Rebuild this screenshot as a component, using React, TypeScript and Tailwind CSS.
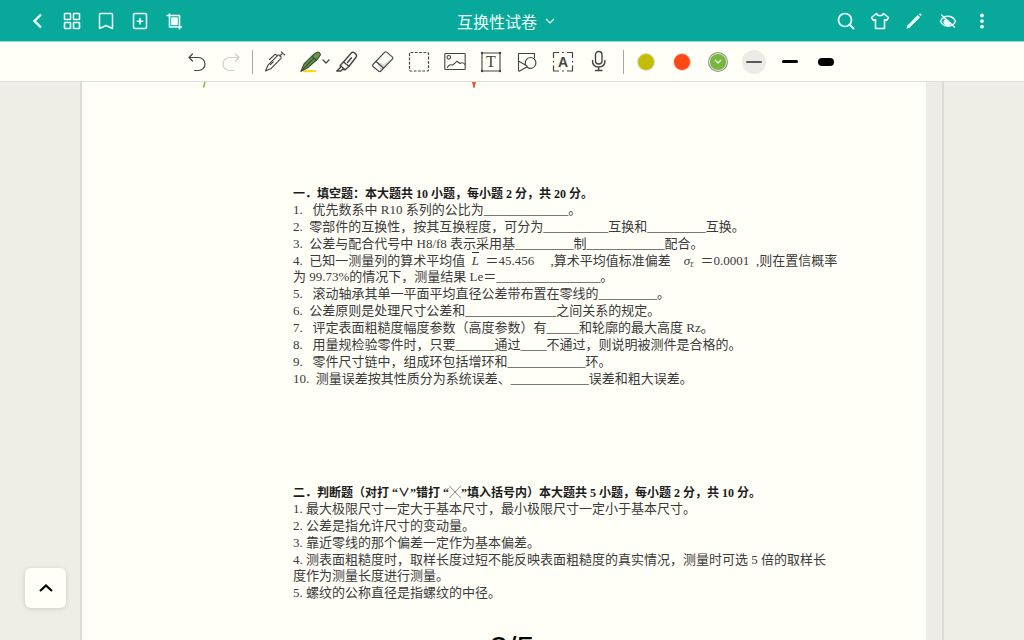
import React, { useState } from 'react';

interface IconProps {
  children: React.ReactNode;
  className?: string;
}

// All toolbar glyphs are drawn on the same 24px grid
function Icon({ children, className = '' }: IconProps) {
  return (
    <svg
      viewBox="0 0 24 24"
      className={`size-6 shrink-0 overflow-visible ${className}`}
      fill="none"
      stroke="currentColor"
      strokeWidth="1.1"
      strokeLinecap="round"
      strokeLinejoin="round"
      aria-hidden="true"
    >
      {children}
    </svg>
  );
}

const leftActions = [
  { name: 'Back', icon: <path d="M15 5.500 8.500 12 15 18.500" strokeWidth="2.400" strokeLinecap="butt" strokeLinejoin="miter" /> },
  {
    name: 'Thumbnails',
    icon: (
      <g strokeWidth="1.600">
        <rect x="4.500" y="4.500" width="6" height="6" rx="0.500" />
        <rect x="13.500" y="4.500" width="6" height="6" rx="0.500" />
        <rect x="4.500" y="13.500" width="6" height="6" rx="0.500" />
        <rect x="13.500" y="13.500" width="6" height="6" rx="0.500" />
      </g>
    ),
  },
  { name: 'Bookmark', icon: <path d="M6.500 4.500h11a1 1 0 0 1 1 1v14l-6.500-3-6.500 3v-14a1 1 0 0 1 1-1z" strokeWidth="1.500" /> },
  {
    name: 'Add page',
    icon: (
      <g strokeWidth="1.500">
        <rect x="5.500" y="4.500" width="13" height="15" rx="1.500" />
        <path d="M12 9.500v5.500M9.300 12.200h5.400" />
      </g>
    ),
  },
  {
    name: 'Crop',
    icon: (
      <g strokeWidth="1.600" strokeLinecap="butt">
        <path d="M4.500 6.500h13v14M7.500 4.500v13.500h12.500" />
        <rect x="10" y="9" width="5" height="6.500" fill="currentColor" />
      </g>
    ),
  },
];

const rightActions = [
  {
    name: 'Search',
    icon: (
      <g strokeWidth="1.700">
        <circle cx="11" cy="11" r="6.500" />
        <path d="m15.800 15.800 3.700 3.700" strokeWidth="2" />
      </g>
    ),
  },
  {
    name: 'Theme',
    icon: <path d="M8.500 4.500 3.500 8.500l2 3 2-1v9h9v-9l2 1 2-3-5-4c-.5 1.400-1.800 2.200-3.500 2.200S9 5.900 8.500 4.500z" strokeWidth="1.600" />,
  },
  {
    name: 'Edit',
    icon: (
      <g fill="currentColor" stroke="none">
        <path d="m15.800 6 2.300 2.300L7.500 18.700l-3 1.100.9-3.200z" />
        <path d="m16.700 5.200 1-.7c.9-.5 2.200.7 1.800 1.600l-.6 1z" />
      </g>
    ),
  },
  {
    name: 'Hide notes',
    icon: (
      <g strokeWidth="1.400">
        <path d="M4.500 12.300C6 9.100 8.800 7.300 12 7.300s6 1.800 7.500 5c-1.500 3.200-4.300 5-7.500 5s-6-1.800-7.500-5z" />
        <path d="M9 11a3.200 3.200 0 0 0 5 4z" fill="currentColor" />
        <path d="m5.500 6 13 12" />
      </g>
    ),
  },
  {
    name: 'More',
    icon: (
      <g fill="currentColor" stroke="none">
        <circle cx="12" cy="6.500" r="1.900" />
        <circle cx="12" cy="12.100" r="1.900" />
        <circle cx="12" cy="17.700" r="1.900" />
      </g>
    ),
  },
];

const tools = [
  {
    name: 'Mechanical pen',
    icon: (
      <g>
        <path d="M2.500 21 5 15.200 14.800 5.300c1.500-1 4 1.200 3.200 3L8.200 18.400z" />
        <path d="M6.500 9.500l5.500-5.200 2.300 1.300M16.800 5.800l3-2.800M18.300 1.800l3.400 3.200M7.500 14.500l2.700-2.700" />
      </g>
    ),
  },
  {
    name: 'Fountain pen',
    icon: (
      <g>
        <path d="M5 21.200h11" stroke="#f2d91c" strokeWidth="2.200" />
        <path d="M2 21.200 5 14 15 4.200 18.200 2.200c1.600-.6 3.800 1.200 3 3L19 8.500 9 17.500z" fill="#5f9a48" stroke="#3e4a38" />
        <path d="M2 21.200 14.500 8.500M13 6.200l4.500 4.300" stroke="#3e4a38" />
        <path d="m24 10 3 3 3-3" strokeWidth="1.300" />
      </g>
    ),
  },
  {
    name: 'Highlighter',
    icon: (
      <g strokeWidth="1.400">
        <path d="M8.500 12 16.300 3c1-1.100 2-1.100 3-.2l1.500 1.300c1 .9 1 2 .2 3.100L14 16.300z" />
        <path d="m8.500 12-3.300 3.500 5 4.300 3.800-3.500M5.200 15.500l.2 2L1.800 21h4l1.800-1.700 2.600.5M12.500 12.500l4-4.800" />
      </g>
    ),
  },
  {
    name: 'Eraser',
    icon: (
      <g>
        <path d="M21 8 12.500 18.300 10 21 5 11.500 12.500 14z" fill="#dcdcda" stroke="none" />
        <path d="M2 14.500 13.500 2.300c.7-.7 1.500-.7 2.200-.1l5.600 4.700c.8.700.8 1.500.1 2.200L9.800 21c-.7.700-1.500.7-2.200.1L2 16.500c-.6-.6-.6-1.400 0-2z" />
        <path d="m5 11.500 7.500 6.500" />
      </g>
    ),
  },
  { name: 'Lasso', icon: <rect x="2.500" y="2.500" width="19" height="18.500" rx="1" strokeDasharray="2.800 1.500" strokeWidth="1.200" strokeLinecap="butt" /> },
  {
    name: 'Image',
    icon: (
      <g>
        <rect x="1.800" y="3.500" width="20.400" height="16" rx="0.600" />
        <circle cx="5.800" cy="7.300" r="1.800" />
        <path d="M4.500 17.500c.8-2.500 3-3.300 5.300-2.300l4.200-4 3 2.300c1.500-1 3.500-.8 5 .8" />
      </g>
    ),
  },
  {
    name: 'Text',
    icon: (
      <g>
        <rect x="3" y="3" width="18" height="18" />
        <path d="M3 3h.01M21 3h.01M3 21h.01M21 21h.01" strokeWidth="2.400" />
        <text x="12" y="17" textAnchor="middle" fontSize="16" fontFamily="Liberation Serif, serif" fill="currentColor" stroke="none">T</text>
      </g>
    ),
  },
  {
    name: 'Shapes',
    icon: (
      <g>
        <path d="M3.500 12V3.500h16V8" />
        <path d="M3.500 12.500c0-.8.600-1 1.200-.7l7 3.900c.6.400.6.900 0 1.300l-7 4c-.6.300-1.200 0-1.200-.7z" />
        <path d="M10.500 14.800a5.400 5.400 0 1 1 1.500 2.200" />
      </g>
    ),
  },
  {
    name: 'Text recognition',
    icon: (
      <g strokeLinecap="butt" strokeWidth="1.200">
        <path d="M2.500 8V2.500H8M16 2.500h5.500V8M21.500 15.500V21H16M8 21H2.500v-5.500" />
        <path d="M11 2.500h2M11 21h2M2.500 11v1.500M21.500 11v1.500" />
        <text x="12" y="16.500" textAnchor="middle" fontSize="14" fontWeight="bold" fontFamily="Liberation Sans, sans-serif" fill="currentColor" stroke="none">A</text>
      </g>
    ),
  },
  {
    name: 'Record',
    icon: (
      <g strokeWidth="1.400">
        <rect x="8.500" y="1.500" width="6.500" height="12.500" rx="3.200" />
        <path d="M5.500 10.500c0 4.200 2.500 6.500 6.200 6.500S18 14.700 18 10.500M11.700 17v3.500M8.500 20.500H15" />
      </g>
    ),
  },
];

const colors = [
  { name: 'Olive', swatch: 'bg-[#c3bd08]' },
  { name: 'Orange', swatch: 'bg-[#ff4713]' },
  { name: 'Green', swatch: 'bg-[#74b83e]' },
];

const widths = [
  { name: 'Thin', bar: 'w-4 h-0.5 bg-[#5c5a56]' },
  { name: 'Medium', bar: 'w-4 h-[3px] bg-black' },
  { name: 'Thick', bar: 'w-4 h-2 bg-black' },
];

const blank = (n: number) => '_'.repeat(n);

// Runs of spaces are kept by whitespace-pre on the sheet
const fillIn: React.ReactNode[] = [
  `1.   优先数系中 R10 系列的公比为${blank(13)}。`,
  `2.  零部件的互换性，按其互换程度，可分为${blank(10)}互换和${blank(9)}互换。`,
  `3.  公差与配合代号中 H8/f8 表示采用基${blank(9)}制${blank(12)}配合。`,
  <>
    4.  已知一测量列的算术平均值{'  '}<i className="border-t border-[#333]">L</i>{'  '}＝45.456{'     '},算术平均值标准偏差{'    '}<i>σ</i>
    <sub className="text-[7px] italic">L̅</sub>{'  '}＝0.0001{'  '},则在置信概率
    <br />
    为 99.73%的情况下，测量结果 Le＝{blank(16)}。
  </>,
  `5.   滚动轴承其单一平面平均直径公差带布置在零线的${blank(9)}。`,
  `6.  公差原则是处理尺寸公差和${blank(14)}之间关系的规定。`,
  `7.   评定表面粗糙度幅度参数（高度参数）有${blank(5)}和轮廓的最大高度 Rz。`,
  `8.   用量规检验零件时，只要${blank(6)}通过${blank(4)}不通过，则说明被测件是合格的。`,
  `9.   零件尺寸链中，组成环包括增环和${blank(12)}环。`,
  `10.  测量误差按其性质分为系统误差、${blank(12)}误差和粗大误差。`,
];

const trueFalse = [
  '1. 最大极限尺寸一定大于基本尺寸，最小极限尺寸一定小于基本尺寸。',
  '2. 公差是指允许尺寸的变动量。',
  '3. 靠近零线的那个偏差一定作为基本偏差。',
  '4. 测表面粗糙度时，取样长度过短不能反映表面粗糙度的真实情况，测量时可选 5 倍的取样长\n度作为测量长度进行测量。',
  '5. 螺纹的公称直径是指螺纹的中径。',
];

function Section({ title, items }: { title: string; items: React.ReactNode[] }) {
  return (
    <section>
      <h2 className="text-[12px] leading-4 font-bold text-[#1c1c1c]">{title}</h2>
      <ol className="flex flex-col gap-px text-[13px] leading-4 text-[#3a3a3a]">
        {items.map((item, i) => (
          <li key={i}>{item}</li>
        ))}
      </ol>
    </section>
  );
}

export default function App() {
  const [tool, setTool] = useState('Fountain pen');
  const [color, setColor] = useState('Green');
  const [width, setWidth] = useState('Thin');

  return (
    <div className="relative flex h-screen flex-col overflow-hidden bg-[#eeede6] font-['Noto_Sans_CJK_SC',sans-serif]">
      {/* Title bar */}
      <header className="flex h-[42px] shrink-0 items-center border-b border-[#8fdcd3] bg-[#08a99a] pr-[25px] pl-[21px] text-[#effffb]">
        <nav className="flex">
          {leftActions.map((a) => (
            <button key={a.name} aria-label={a.name} className="flex h-10 w-[34px] items-center justify-center">
              <Icon>{a.icon}</Icon>
            </button>
          ))}
        </nav>
        <div className="flex flex-1 justify-center pr-2">
          <button className="flex items-center gap-2">
            <h1 className="text-base leading-6">互换性试卷</h1>
            <svg viewBox="0 0 10 6" className="h-1.5 w-2.5" fill="none" stroke="currentColor" strokeWidth="1.200" aria-hidden="true">
              <path d="m1 1 4 4 4-4" />
            </svg>
          </button>
        </div>
        <nav className="flex">
          {rightActions.map((a) => (
            <button key={a.name} aria-label={a.name} className="flex h-10 w-[34px] items-center justify-center">
              <Icon>{a.icon}</Icon>
            </button>
          ))}
        </nav>
      </header>

      {/* Drawing tools */}
      <div className="flex h-10 shrink-0 items-center justify-center border-b border-[#dfdedb] bg-[#fffff8] text-[#444]">
        <button aria-label="Undo" className="flex w-[34px] justify-center">
          <Icon>
            <path d="M4 7.500h9.500a6.500 6.500 0 0 1 0 13H9.500M7.500 4 4 7.500 7.500 11" strokeWidth="1.200" />
          </Icon>
        </button>
        <button aria-label="Redo" disabled className="flex w-[34px] justify-center text-[#cdccc8]">
          <Icon>
            <path d="M20 7.500h-9.500a6.500 6.500 0 0 0 0 13h4M16.500 4 20 7.500 16.500 11" strokeWidth="1.200" />
          </Icon>
        </button>
        <div className="mx-1 h-6 w-px bg-[#aaa9a5]" />
        {tools.map((t) => (
          <button
            key={t.name}
            aria-label={t.name}
            aria-pressed={tool === t.name}
            onClick={() => setTool(t.name)}
            className="flex w-9 justify-center"
          >
            <Icon>{t.icon}</Icon>
          </button>
        ))}
        <div className="mr-1 ml-1.5 h-6 w-px bg-[#aaa9a5]" />
        {colors.map((c) => (
          <button
            key={c.name}
            aria-label={c.name}
            aria-pressed={color === c.name}
            onClick={() => setColor(c.name)}
            className="flex w-9 justify-center"
          >
            <span
              className={`flex size-[18px] items-center justify-center rounded-full border ${c.swatch} ${
                color === c.name ? 'border-[#d9e8cb] ring-1 ring-[#8f948b]' : 'border-[#e3e1d8]'
              }`}
            >
              {color === c.name && (
                <svg viewBox="0 0 8 5" className="h-[5px] w-2" fill="none" stroke="white" strokeWidth="1.200" aria-hidden="true">
                  <path d="m1 1 3 3 3-3" />
                </svg>
              )}
            </span>
          </button>
        ))}
        {widths.map((w) => (
          <button
            key={w.name}
            aria-label={w.name}
            aria-pressed={width === w.name}
            onClick={() => setWidth(w.name)}
            className="flex w-9 justify-center"
          >
            <span className={`flex size-6 items-center justify-center rounded-full ${width === w.name ? 'bg-[#edebe7]' : ''}`}>
              <span className={`rounded-full ${w.bar}`} />
            </span>
          </button>
        ))}
      </div>

      {/* Exam sheet */}
      <main className="mx-20 flex min-h-0 flex-1 border-x-2 border-[#dcdbd7] bg-[#edece7] pr-4">
        <article className="relative flex-1 overflow-hidden bg-[#fffff8] pt-[104px] pl-[25%] font-['Liberation_Serif','Noto_Sans_CJK_SC',serif] whitespace-pre">
          {/* ends of handwritten strokes */}
          <svg className="absolute top-0 left-[120px] h-1.5 w-1" viewBox="0 0 4 6" aria-hidden="true">
            <path d="M3 0 1.500 5.500" stroke="#7fb84e" strokeWidth="1.500" />
          </svg>
          <svg className="absolute top-0 left-[390px] h-1.5 w-1" viewBox="0 0 4 6" aria-hidden="true">
            <path d="M0 0h4L2.500 6h-1z" fill="#dc5a3c" />
          </svg>
          <div className="flex flex-col gap-[98px]">
            <Section title="一．填空题：本大题共 10 小题，每小题 2 分，共 20 分。" items={fillIn} />
            <Section title="二．判断题（对打 “∨”错打 “╳”填入括号内）本大题共 5 小题，每小题 2 分，共 10 分。" items={trueFalse} />
          </div>
        </article>
      </main>

      <button
        aria-label="Scroll up"
        className="absolute bottom-8 left-[25px] flex h-10 w-[41px] items-center justify-center rounded-md bg-[#fffff8] text-black shadow-[0_1px_5px_rgba(90,70,70,0.2)]"
      >
        <svg viewBox="0 0 14 10" className="h-2.5 w-3.5" fill="none" stroke="currentColor" strokeWidth="2.200" aria-hidden="true">
          <path d="m1 8 6-5.500L13 8" />
        </svg>
      </button>
      <div className="absolute -bottom-6 left-1/2 -translate-x-1/2 font-['Liberation_Sans',sans-serif] text-[32px] leading-8 text-black">2/5</div>
    </div>
  );
}
